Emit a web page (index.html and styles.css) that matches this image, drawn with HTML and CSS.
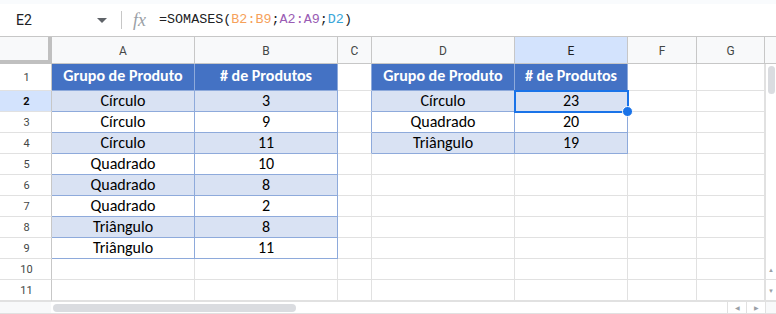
FILE: index.html
```html
<!DOCTYPE html>
<html lang="pt">
<head>
  <meta charset="UTF-8" />
  <title>Planilha – SOMASES</title>
  <link rel="stylesheet" href="styles.css">
</head>
<body>

  <div class="topstrip"></div>

  <div class="formula-bar">
    <div class="namebox">E2</div>
    <svg class="caret" width="10" height="5" viewBox="0 0 10 5"><path d="M0 0h10L5 5z" fill="#5f6368"/></svg>
    <div class="sep"></div>
    <div class="fx">fx</div>
    <div class="formula">=SOMASES(<span class="c1">B2:B9</span>;<span class="c2">A2:A9</span>;<span class="c3">D2</span>)</div>
  </div>

  <div class="sheet">
    <!-- column headers -->
    <div class="corner"></div>
    <div class="colh">A</div>
    <div class="colh">B</div>
    <div class="colh">C</div>
    <div class="colh">D</div>
    <div class="colh sel">E</div>
    <div class="colh">F</div>
    <div class="colh">G</div>
    <div class="vs-top"></div>

    <!-- row 1 -->
    <div class="rowh">1</div>
    <div class="cell th">Grupo de Produto</div>
    <div class="cell th">&#35; de Produtos</div>
    <div class="cell pre"></div>
    <div class="cell th">Grupo de Produto</div>
    <div class="cell th">&#35; de Produtos</div>
    <div class="cell"></div>
    <div class="cell"></div>
    <div class="vs"><div class="thumb"></div></div>

    <!-- row 2 -->
    <div class="rowh sel">2</div>
    <div class="cell tb alt">Círculo</div>
    <div class="cell tb alt">3</div>
    <div class="cell pre"></div>
    <div class="cell tb alt">Círculo</div>
    <div class="cell tb alt active">23<span class="handle"></span></div>
    <div class="cell"></div>
    <div class="cell"></div>
    <div class="vs"></div>

    <!-- row 3 -->
    <div class="rowh">3</div>
    <div class="cell tb">Círculo</div>
    <div class="cell tb">9</div>
    <div class="cell pre"></div>
    <div class="cell tb">Quadrado</div>
    <div class="cell tb">20</div>
    <div class="cell"></div>
    <div class="cell"></div>
    <div class="vs"></div>

    <!-- row 4 -->
    <div class="rowh">4</div>
    <div class="cell tb alt">Círculo</div>
    <div class="cell tb alt">11</div>
    <div class="cell pre"></div>
    <div class="cell tb alt">Triângulo</div>
    <div class="cell tb alt">19</div>
    <div class="cell"></div>
    <div class="cell"></div>
    <div class="vs"></div>

    <!-- row 5 -->
    <div class="rowh">5</div>
    <div class="cell tb">Quadrado</div>
    <div class="cell tb">10</div>
    <div class="cell"></div>
    <div class="cell"></div>
    <div class="cell"></div>
    <div class="cell"></div>
    <div class="cell"></div>
    <div class="vs"></div>

    <!-- row 6 -->
    <div class="rowh">6</div>
    <div class="cell tb alt">Quadrado</div>
    <div class="cell tb alt">8</div>
    <div class="cell"></div>
    <div class="cell"></div>
    <div class="cell"></div>
    <div class="cell"></div>
    <div class="cell"></div>
    <div class="vs"></div>

    <!-- row 7 -->
    <div class="rowh">7</div>
    <div class="cell tb">Quadrado</div>
    <div class="cell tb">2</div>
    <div class="cell"></div>
    <div class="cell"></div>
    <div class="cell"></div>
    <div class="cell"></div>
    <div class="cell"></div>
    <div class="vs"></div>

    <!-- row 8 -->
    <div class="rowh">8</div>
    <div class="cell tb alt">Triângulo</div>
    <div class="cell tb alt">8</div>
    <div class="cell"></div>
    <div class="cell"></div>
    <div class="cell"></div>
    <div class="cell"></div>
    <div class="cell"></div>
    <div class="vs"></div>

    <!-- row 9 -->
    <div class="rowh">9</div>
    <div class="cell tb">Triângulo</div>
    <div class="cell tb">11</div>
    <div class="cell"></div>
    <div class="cell"></div>
    <div class="cell"></div>
    <div class="cell"></div>
    <div class="cell"></div>
    <div class="vs"></div>

    <!-- row 10 -->
    <div class="rowh">10</div>
    <div class="cell"></div>
    <div class="cell"></div>
    <div class="cell"></div>
    <div class="cell"></div>
    <div class="cell"></div>
    <div class="cell"></div>
    <div class="cell"></div>
    <div class="vs arrow">&#9650;</div>

    <!-- row 11 -->
    <div class="rowh">11</div>
    <div class="cell"></div>
    <div class="cell"></div>
    <div class="cell"></div>
    <div class="cell"></div>
    <div class="cell"></div>
    <div class="cell"></div>
    <div class="cell"></div>
    <div class="vs arrow">&#9660;</div>
  </div>

  <div class="hscroll">
    <div class="hs-left"></div>
    <div class="hs-track"><div class="hthumb"></div></div>
    <div class="hs-btn">&#9664;</div>
    <div class="hs-btn">&#9654;</div>
    <div class="hs-end"></div>
  </div>

</body>
</html>
```

FILE: styles.css
```css
* { margin: 0; padding: 0; box-sizing: border-box; }
body { width: 776px; height: 314px; overflow: hidden; background: #fff; font-family: Roboto, Arial, sans-serif; color: #202124; }

.topstrip { height: 4px; background: #f9fbfd; }

.formula-bar { height: 32px; display: flex; align-items: center; }
.namebox { width: 96px; padding-left: 16px; font-size: 14px; color: #202124; }
.caret { margin-left: 1px; }
.sep { width: 1px; height: 18px; background: #c7c7c7; margin-left: 14px; }
.fx { margin-left: 11px; font-family: "Liberation Serif", serif; font-style: italic; font-size: 18px; color: #9aa0a6; width: 26px; line-height: 1; }
.formula { font-family: "Liberation Mono", monospace; font-size: 13.4px; color: #202124; margin-top: -2px; }
.c1 { color: #f6a15a; }
.c2 { color: #9a5cb4; }
.c3 { color: #3aa6d9; }

.sheet { display: grid; grid-template-columns: 52px 143px 143px 34px 143px 113px 69px 68px 11px; grid-template-rows: 27px 27px repeat(10, 21px); border-top: 1px solid #c7c7c7; }

.corner { background: #f8f9fa; border-right: 4px solid #c0c0c0; border-bottom: 4px solid #c0c0c0; }
.colh { background: #f8f9fa; border-right: 1px solid #c7c7c7; border-bottom: 1px solid #c7c7c7; font-size: 12px; color: #444746; display: flex; align-items: center; justify-content: center; padding-top: 1px; }
.colh.sel { background: #d3e3fd; color: #202124; }
.vs-top { background: #f8f9fa; border-bottom: 1px solid #c7c7c7; }

.rowh { border-right: 1px solid #c7c7c7; border-bottom: 1px solid #e1e1e1; font-size: 11px; color: #444746; display: flex; align-items: center; justify-content: center; padding-left: 2px; }
.rowh.sel { background: #d3e3fd; font-weight: bold; color: #0b0b0b; }

.cell { border-right: 1px solid #e1e1e1; border-bottom: 1px solid #e1e1e1; font-family: Carlito, Lato, "Open Sans", sans-serif; font-size: 16px; color: #000; display: flex; align-items: flex-end; justify-content: center; position: relative; line-height: 20px; }
.cell.pre { border-right-color: #8eaadb; }
.cell.tb { border-right-color: #8eaadb; border-bottom-color: #8eaadb; }
.cell.alt { background: #d9e2f3; }
.cell.th { background: #4472c4; color: #fff; font-weight: bold; border-right: 1px solid #8eaadb; border-bottom: 1px solid #8eaadb; padding-bottom: 4px; }

.cell.active { outline: 2px solid #1a73e8; outline-offset: -1px; z-index: 2; }
.handle { position: absolute; right: -6px; bottom: -6px; width: 11px; height: 11px; border-radius: 50%; background: #1a73e8; border: 1px solid #fff; }

.vs { border-left: 1px solid #e1e1e1; background: #fff; position: relative; }
.vs .thumb { position: absolute; left: 2px; top: 2px; width: 7px; height: 28px; background: #dadce0; border-radius: 4px; z-index: 1; }
.vs.arrow { font-size: 6px; color: #9aa0a6; display: flex; align-items: center; justify-content: center; border-bottom: 1px solid #e1e1e1; }

.hscroll { height: 13px; display: flex; border-top: 1px solid #e1e1e1; border-bottom: 1px solid #e1e1e1; background: #fff; }
.hs-left { width: 52px; background: #f8f9fa; }
.hs-track { width: 683px; position: relative; }
.hthumb { position: absolute; left: 2px; top: 2px; width: 243px; height: 8px; background: #dadce0; border-radius: 4px; }
.hs-btn { width: 19px; font-size: 6px; color: #9aa0a6; display: flex; align-items: center; justify-content: center; border-left: 1px solid #e1e1e1; }
.hs-end { width: 11px; border-left: 1px solid #e1e1e1; background: #f8f9fa; }
```
